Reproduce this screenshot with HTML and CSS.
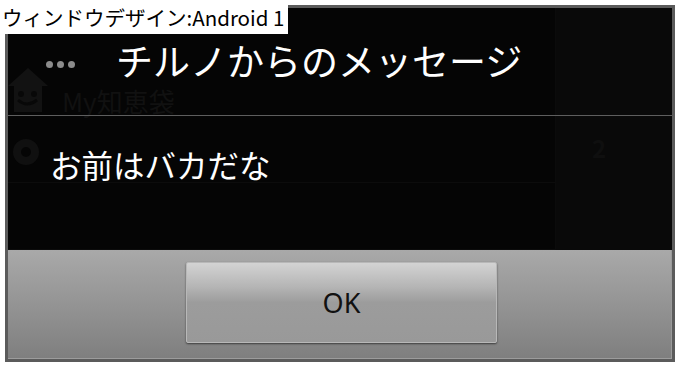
FILE: index.html
```html
<!DOCTYPE html>
<html lang="ja">
<head>
<meta charset="utf-8">
<title>Android dialog</title>
<link rel="stylesheet" href="styles.css">
</head>
<body>
<div class="caption">ウィンドウデザイン:Android 1</div>
<div class="frame">
  <div class="screen">
    <div class="backdrop" aria-hidden="true">
      <div class="bd-main">
        <div class="bd-bar">
          <div class="dots"><span></span><span></span><span></span></div>
          <svg class="house" width="40" height="46" viewBox="0 0 40 46">
            <path d="M20 2 L40 20 L34 20 L34 46 L6 46 L6 20 L0 20 Z" fill="#121212"/>
            <circle cx="13" cy="28" r="3" fill="#080808"/>
            <circle cx="26" cy="28" r="3" fill="#080808"/>
            <path d="M10 34 Q19 42 29 34" stroke="#080808" stroke-width="3" fill="none"/>
          </svg>
          <span class="bd-title">My知恵袋</span>
        </div>
        <div class="bd-row">
          <svg width="28" height="28" viewBox="0 0 28 28"><circle cx="14" cy="14" r="9" fill="none" stroke="#101010" stroke-width="8"/></svg>
        </div>
        <div class="bd-row"></div>
      </div>
      <div class="bd-side">
        <div class="crown">2</div>
      </div>
    </div>
    <div class="dialog">
      <div class="d-title">チルノからのメッセージ</div>
      <div class="d-msg">お前はバカだな</div>
    </div>
  </div>
  <div class="buttonbar">
    <button class="ok">OK</button>
  </div>
</div>
</body>
</html>
```
FILE: styles.css
```css
html, body {
  margin: 0;
  padding: 0;
  background: #ffffff;
  width: 680px;
  height: 368px;
  overflow: hidden;
  font-family: "Noto Sans CJK JP", "Noto Sans", sans-serif;
}
.caption {
  position: absolute;
  left: 0;
  top: 0;
  z-index: 5;
  background: #ffffff;
  color: #000000;
  font-size: 20.5px;
  line-height: 34px;
  height: 34px;
  padding: 0 4px 0 2px;
  white-space: nowrap;
}
.frame {
  margin: 5px 0 0 5px;
  width: 664px;
  height: 351px;
  border: 3px solid #5b5b5b;
  display: flex;
  flex-direction: column;
  background: #5b5b5b;
}
.screen {
  position: relative;
  height: 242px;
  background: #050505;
  overflow: hidden;
}
.backdrop {
  position: absolute;
  inset: 0;
  display: flex;
}
.bd-main {
  flex: 1;
  display: flex;
  flex-direction: column;
}
.bd-bar {
  height: 108px;
  display: flex;
  align-items: flex-start;
  gap: 14px;
  position: relative;
}
.dots {
  position: absolute;
  left: 38px;
  top: 53px;
  display: flex;
  gap: 4px;
}
.dots span {
  width: 7px;
  height: 7px;
  border-radius: 50%;
  background: #8c8c8c;
}
.house {
  margin-top: 58px;
}
.bd-title {
  margin-top: 81px;
  font-size: 26px;
  line-height: 24px;
  color: #111111;
}
.bd-row {
  height: 44px;
  border-bottom: 1px solid #0c0c0c;
  padding: 22px 0 0 4px;
}
.bd-side {
  width: 116px;
  background: #090909;
  border-left: 1px solid #0b0b0b;
}
.crown {
  margin: 122px 0 0 36px;
  font-size: 24px;
  font-weight: bold;
  color: #0f0f0f;
}
.dialog {
  position: relative;
  display: flex;
  flex-direction: column;
}
.d-title {
  height: 108px;
  box-sizing: border-box;
  padding: 32px 0 0 108px;
  font-size: 37px;
  line-height: 40px;
  color: #ffffff;
  border-bottom: 1px solid #5e5e5e;
  white-space: nowrap;
}
.d-msg {
  padding: 28px 0 0 42px;
  font-size: 31.5px;
  line-height: 40px;
  color: #ffffff;
  white-space: nowrap;
}
.buttonbar {
  flex: 1;
  display: flex;
  align-items: center;
  justify-content: center;
  padding-bottom: 3px;
  background: linear-gradient(#a9a9a9, #7f7f7f);
  border-right: 1px solid #9a9a9a;
  border-bottom: 1px solid #9c9c9c;
}
.ok {
  width: 311px;
  height: 81px;
  margin-left: 4px;
  border: 1px solid #b8b8b8;
  border-radius: 2px;
  background: linear-gradient(#d3d3d3 0%, #b5b5b5 30%, #9c9c9c 50%, #999999 100%);
  box-shadow: 0 1px 2px rgba(0, 0, 0, 0.55);
  font-family: "Noto Sans", "Noto Sans CJK JP", sans-serif;
  font-size: 27px;
  color: #111111;
  padding: 0;
}
```
